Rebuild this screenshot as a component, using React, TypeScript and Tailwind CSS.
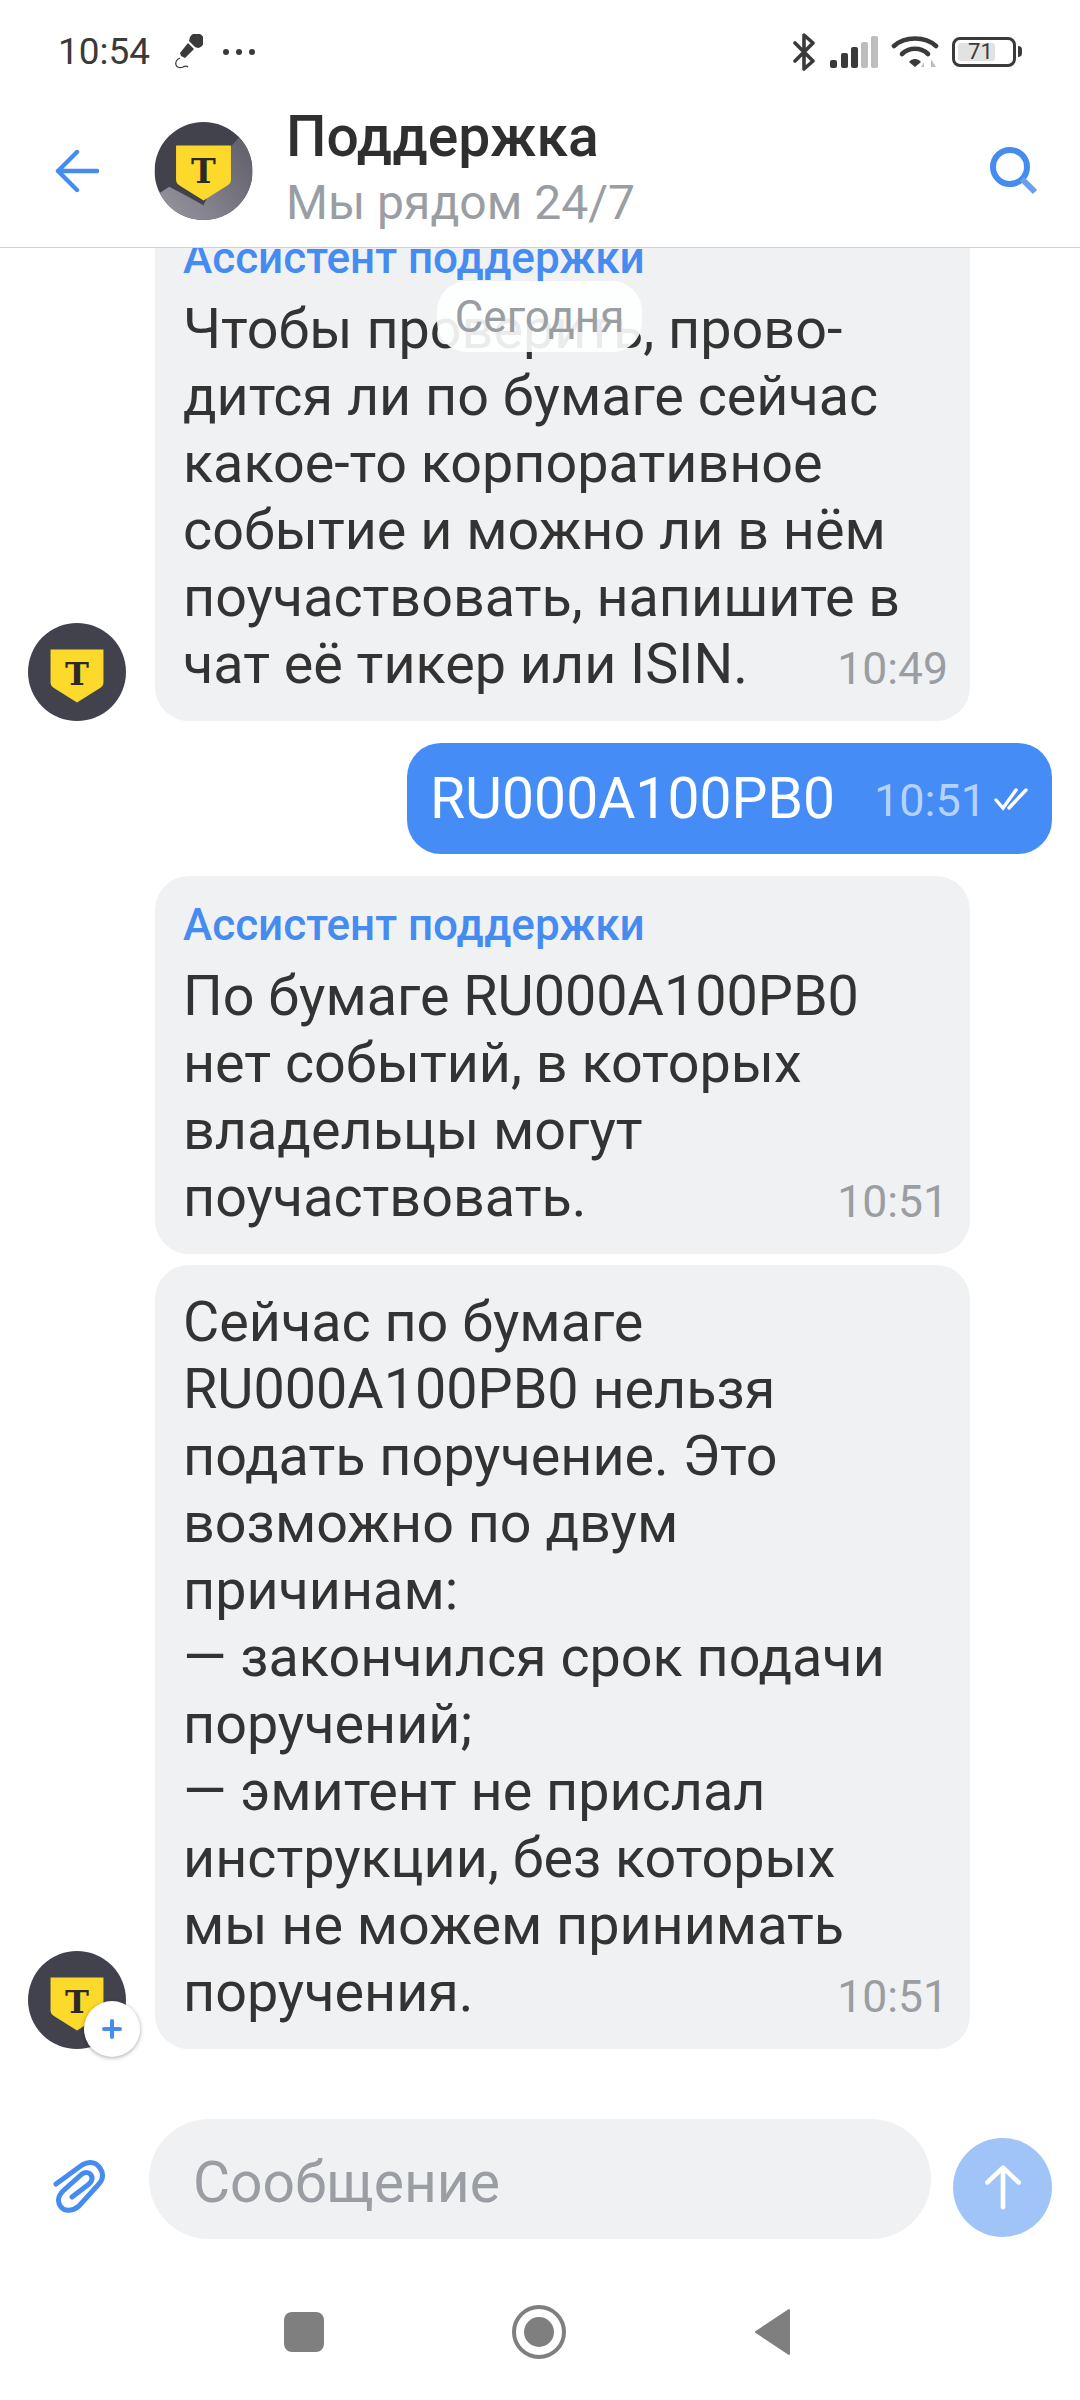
import React from 'react';

const FONT = "font-['Roboto',sans-serif]";

// Yellow shield with the T, used in every avatar
const Shield: React.FC<{ x: number; y: number; w: number }> = ({ x, y, w }) => (
  <g transform={`translate(${x} ${y}) scale(${w / 56})`}>
    <path d="M0 0H56V35Q56 39 52 41L28 56L4 41Q0 39 0 35Z" fill="#fdd92c" />
    <text x="28" y="38" textAnchor="middle" fontFamily="'DejaVu Serif',serif" fontWeight="700" fontSize="34" fill="#2b2a26">
      Т
    </text>
  </g>
);

const HeaderAvatar = () => (
  <svg viewBox="0 0 100 100" className="h-[98px] w-[99px] shrink-0">
    <defs>
      <clipPath id="avatar-clip">
        <circle cx="50" cy="50" r="50" />
      </clipPath>
      <linearGradient id="ridge" x1="0" y1="1" x2="1" y2="0.3">
        <stop offset="0" stopColor="#9a99a3" />
        <stop offset="1" stopColor="#65646f" />
      </linearGradient>
    </defs>
    <g clipPath="url(#avatar-clip)">
      <rect width="100" height="100" fill="#42424d" />
      <path d="M0 76L15 66L32 75L50 85L78 25L86 16L100 30V100H0Z" fill="url(#ridge)" />
    </g>
    <Shield x={22} y={24} w={56} />
  </svg>
);

const Avatar = () => (
  <svg viewBox="0 0 100 100" className="h-[98px] w-[98px]">
    <circle cx="50" cy="50" r="50" fill="#42424d" />
    <Shield x={23} y={27} w={54} />
  </svg>
);

const StatusBar = () => (
  <div className="flex h-[100px] items-center justify-between pl-[58px] pr-[58px] pt-[3px] text-[#3a3a3a]">
    <div className="flex items-center">
      <span className="text-[37px] leading-none">10:54</span>
      <svg viewBox="0 0 30 36" className="ml-[23px] h-[36px] w-[30px]">
        <path d="M17 3a7.5 7.5 0 1 1 8 11l-3-1-6-6zM15 9l6 6-9 9-4-2-1-3z" fill="#3a3a3a" />
        <path d="M7 24c-3 1-5 4-4 7s5 3 7 2 3-2 5 0" fill="none" stroke="#3a3a3a" strokeWidth="1.2" />
      </svg>
      <div className="ml-[20px] flex gap-[7px]">
        <span className="h-[6px] w-[6px] rounded-full bg-[#3a3a3a]" />
        <span className="h-[6px] w-[6px] rounded-full bg-[#3a3a3a]" />
        <span className="h-[6px] w-[6px] rounded-full bg-[#3a3a3a]" />
      </div>
    </div>
    <div className="flex items-center">
      <svg viewBox="0 0 24 38" className="h-[38px] w-[24px]">
        <path d="M3 10l18 18-9 8V2l9 8L3 28" fill="none" stroke="#3a3a3a" strokeWidth="3.6" strokeLinecap="round" strokeLinejoin="round" />
      </svg>
      <svg viewBox="0 0 48 32" className="ml-[14px] h-[32px] w-[48px]">
        <rect x="0" y="24" width="7" height="8" rx="2" fill="#3a3a3a" />
        <rect x="11" y="17" width="7" height="15" rx="2" fill="#3a3a3a" />
        <rect x="21" y="11" width="7" height="21" rx="2" fill="#3a3a3a" />
        <rect x="31" y="6" width="7" height="26" rx="2" fill="#bdbdbd" />
        <rect x="41" y="0" width="7" height="32" rx="2" fill="#bdbdbd" />
      </svg>
      <svg viewBox="0 0 48 34" className="ml-[13px] h-[34px] w-[48px]">
        <path d="M3 11C14 1 34 1 45 11" fill="none" stroke="#3a3a3a" strokeWidth="4.6" strokeLinecap="round" />
        <path d="M11 19C18 12 30 12 37 19" fill="none" stroke="#3a3a3a" strokeWidth="4.6" strokeLinecap="round" />
        <path d="M18 27l6 5 6-5c-3-4-9-4-12 0z" fill="#3a3a3a" />
        <path d="M33 27v5h-3zM40 24l5 8h-5z" fill="#bdbdbd" />
      </svg>
      <div className="ml-[13px] flex items-center">
        <div className="flex h-[30px] w-[64px] items-center rounded-[8px] border-[3px] border-[#3a3a3a] p-[3px]">
          <div className="flex h-full w-[71%] items-center justify-center rounded-[3px] bg-[#e2e2e2] pl-[8px] text-[22px] leading-none">
            71
          </div>
        </div>
        <span className="ml-[2px] h-[11px] w-[4px] rounded-r-full bg-[#3a3a3a]" />
      </div>
    </div>
  </div>
);

const Header = () => (
  <div className="flex h-[148px] items-center border-b border-[#cfd1d3] bg-white pb-[5px] pl-[55px] pr-[42px]">
    <svg viewBox="0 0 44 44" className="h-[44px] w-[44px] shrink-0">
      <path d="M42 22H3M22 3L3 22l19 19" fill="none" stroke="#458bf0" strokeWidth="4.4" strokeLinecap="round" strokeLinejoin="round" />
    </svg>
    <div className="ml-[55px]">
      <HeaderAvatar />
    </div>
    <div className="ml-[33px] min-w-0 flex-1">
      <div className="text-[57px] font-medium leading-[64px] text-[#2f2f2f]">Поддержка</div>
      <div className="text-[48px] leading-[68px] text-[#9a9ea3]">Мы рядом 24/7</div>
    </div>
    <svg viewBox="0 0 48 48" className="h-[48px] w-[48px] shrink-0">
      <circle cx="20" cy="20" r="17" fill="none" stroke="#458bf0" strokeWidth="6" />
      <path d="M32 32l13 13" stroke="#6a9ef0" strokeWidth="6" />
    </svg>
  </div>
);

const Bubble: React.FC<{ label?: boolean; lines: string[]; time: string }> = ({ label, lines, time }) => {
  const last = lines[lines.length - 1];
  return (
    <div className="w-[815px] rounded-[34px] bg-[#eff1f3] pb-[23px] pl-[28px] pr-[22px] pt-[24px]">
      {label && <div className="-mt-[3px] mb-[10px] text-[44px] font-medium leading-[56px] text-[#458bf0]">Ассистент поддержки</div>}
      {lines.slice(0, -1).map((line) => (
        <div key={line} className="text-[55.7px] leading-[67px] text-[#333333]">
          {line}
        </div>
      ))}
      <div className="flex items-end justify-between">
        <span className="text-[55.7px] leading-[67px] text-[#333333]">{last}</span>
        <span className="text-[44.5px] leading-[57px] text-[#9a9ea3]">{time}</span>
      </div>
    </div>
  );
};

const Composer = () => (
  <div className="flex items-center pl-[52px] pr-[28px]">
    <svg viewBox="0 0 56 56" className="mt-[18px] h-[58px] w-[56px] shrink-0">
      <path
        d="M4 24L30 5c7-4 14-3 18 3s3 12-2 17L27 46c-6 5-14 6-18 1s-3-11 2-16l19-17c3-2 7-2 9 1s1 6-2 9L20 37"
        fill="none"
        stroke="#458bf0"
        strokeWidth="5"
        strokeLinecap="round"
      />
    </svg>
    <div className="ml-[41px] flex h-[120px] w-[782px] items-center rounded-full bg-[#eff1f3] pl-[44px] pt-[7px] text-[57px] text-[#9a9ea3]">
      Сообщение
    </div>
    <div className="ml-[22px] mt-[16px] flex h-[99px] w-[99px] items-center justify-center rounded-full bg-[#a1c4f8]">
      <svg viewBox="0 0 40 50" className="h-[46px] w-[38px]">
        <path d="M20 47V4M3 20L20 4l17 16" fill="none" stroke="#ffffff" strokeWidth="5" strokeLinecap="round" strokeLinejoin="round" />
      </svg>
    </div>
  </div>
);

const NavBar = () => (
  <div className="flex h-[126px] items-center justify-between pb-[10px] pl-[284px] pr-[288px]">
    <span className="h-[40px] w-[40px] rounded-[8px] bg-[#7f7f7f]" />
    <span className="flex h-[54px] w-[54px] items-center justify-center rounded-full border-[4px] border-[#7f7f7f]">
      <span className="h-[30px] w-[30px] rounded-full bg-[#7f7f7f]" />
    </span>
    <svg viewBox="0 0 38 48" className="h-[48px] w-[38px]">
      <path d="M35 2L2 24l33 22z" fill="#7f7f7f" stroke="#7f7f7f" strokeWidth="2" strokeLinejoin="round" />
    </svg>
  </div>
);

export default function App() {
  return (
    <div className={`${FONT} flex h-[2400px] w-[1080px] flex-col overflow-hidden bg-white`}>
      <StatusBar />
      <Header />

      <div className="relative flex min-h-0 flex-1 flex-col justify-end overflow-hidden pb-[70px]">
        {/* Sticky date chip sits on top of the scrolled messages */}
        <div className="absolute left-[437px] top-[33px] z-10 flex h-[71px] w-[205px] items-center justify-center rounded-[30px] bg-white/90 text-[44px] text-[#9a9ea3]">
          Сегодня
        </div>

        <div className="flex shrink-0 items-end pl-[28px]">
          <Avatar />
          <div className="ml-[29px]">
            <Bubble
              label
              lines={[
                'Чтобы проверить, прово-',
                'дится ли по бумаге сейчас',
                'какое-то корпоративное',
                'событие и можно ли в нём',
                'поучаствовать, напишите в',
                'чат её тикер или ISIN.',
              ]}
              time="10:49"
            />
          </div>
        </div>

        <div className="mt-[22px] flex shrink-0 justify-end pr-[28px]">
          <div className="flex h-[111px] w-[645px] items-center rounded-[34px] bg-[#468cf6] pl-[23px] text-white">
            <span className="text-[57px] leading-none">RU000A100PB0</span>
            <span className="ml-[39px] mt-[3px] text-[45px] leading-none text-[#b5d2fb]">10:51</span>
            <svg viewBox="0 0 38 24" className="ml-[8px] h-[24px] w-[38px]">
              <path d="M2 13l7 8L22 3M15 21L32 3" fill="none" stroke="#ffffff" strokeWidth="3.4" strokeLinecap="round" />
            </svg>
          </div>
        </div>

        <div className="mt-[22px] shrink-0 pl-[155px]">
          <Bubble
            label
            lines={['По бумаге RU000A100PB0', 'нет событий, в которых', 'владельцы могут', 'поучаствовать.']}
            time="10:51"
          />
        </div>

        <div className="mt-[11px] flex shrink-0 items-end pl-[28px]">
          <div className="relative">
            <Avatar />
            <div className="absolute left-[56px] top-[50px] flex h-[56px] w-[56px] items-center justify-center rounded-full bg-white text-[#458bf0] shadow-[0_1px_4px_rgba(0,0,0,0.35)]">
              <svg viewBox="0 0 20 20" className="h-[20px] w-[20px]">
                <path d="M10 2v16M2 10h16" fill="none" stroke="#458bf0" strokeWidth="4" strokeLinecap="round" />
              </svg>
            </div>
          </div>
          <div className="ml-[29px]">
            <Bubble
              lines={[
                'Сейчас по бумаге',
                'RU000A100PB0 нельзя',
                'подать поручение. Это',
                'возможно по двум',
                'причинам:',
                '— закончился срок подачи',
                'поручений;',
                '— эмитент не прислал',
                'инструкции, без которых',
                'мы не можем принимать',
                'поручения.',
              ]}
              time="10:51"
            />
          </div>
        </div>
      </div>

      <div className="h-[155px] shrink-0">
        <Composer />
      </div>
      <NavBar />
    </div>
  );
}
